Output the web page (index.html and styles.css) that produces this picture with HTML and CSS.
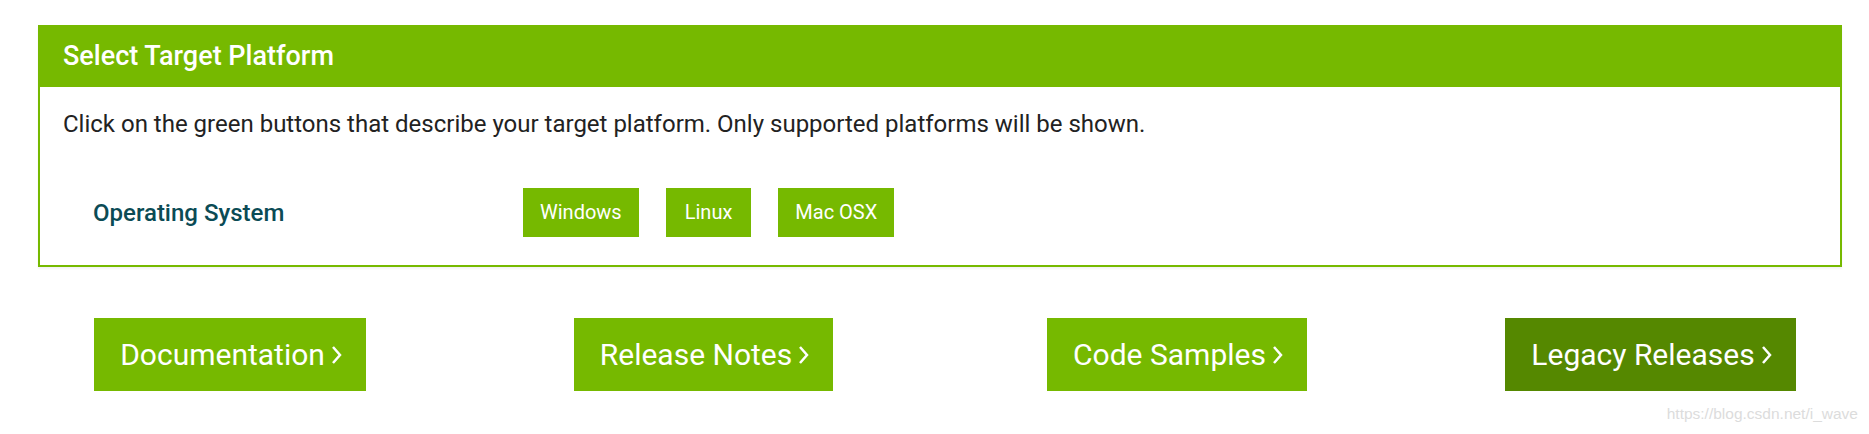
FILE: index.html
```html
<!DOCTYPE html>
<html lang="en">
<head>
<meta charset="utf-8">
<title>Select Target Platform</title>
<link rel="stylesheet" href="styles.css">
</head>
<body>
<div class="page">
  <section class="panel">
    <header class="panel-heading">Select Target Platform</header>
    <div class="panel-body">
      <p class="intro">Click on the green buttons that describe your target platform. Only supported platforms will be shown.</p>
      <div class="os-row">
        <div class="os-label">Operating System</div>
        <div class="os-options">
          <span class="opt">Windows</span>
          <span class="opt">Linux</span>
          <span class="opt">Mac OSX</span>
        </div>
      </div>
    </div>
  </section>
  <nav class="links">
    <div class="link-col"><a class="link-btn">Documentation<svg class="chev" viewBox="0 0 11 20" width="11" height="20"><path d="M2 2 L9 10 L2 18" fill="none" stroke="#fff" stroke-width="2.5"/></svg></a></div>
    <div class="link-col"><a class="link-btn">Release Notes<svg class="chev" viewBox="0 0 11 20" width="11" height="20"><path d="M2 2 L9 10 L2 18" fill="none" stroke="#fff" stroke-width="2.5"/></svg></a></div>
    <div class="link-col"><a class="link-btn">Code Samples<svg class="chev" viewBox="0 0 11 20" width="11" height="20"><path d="M2 2 L9 10 L2 18" fill="none" stroke="#fff" stroke-width="2.5"/></svg></a></div>
    <div class="link-col"><a class="link-btn dark">Legacy Releases<svg class="chev" viewBox="0 0 11 20" width="11" height="20"><path d="M2 2 L9 10 L2 18" fill="none" stroke="#fff" stroke-width="2.5"/></svg></a></div>
  </nav>
</div>
<div class="watermark">https://blog.csdn.net/i_wave</div>
</body>
</html>
```
FILE: styles.css
```css
html, body {
  margin: 0;
  padding: 0;
  background: #fff;
  overflow: hidden;
}
body {
  font-family: Roboto, "Noto Sans", sans-serif;
  width: 1869px;
  height: 434px;
  position: relative;
}
.page {
  padding: 25px 0 0 38px;
  width: 1804px;
}
.panel {
  box-shadow: 0 2px 2px rgba(0, 0, 0, 0.05);
}
.panel-heading {
  background: #76b900;
  color: #fff;
  height: 62px;
  line-height: 62px;
  padding-left: 25px;
  font-size: 27px;
  font-weight: 500;
}
.panel-body {
  border: 2px solid #76b900;
  border-top: none;
  padding: 0 0 28px 23px;
}
.intro {
  margin: 0;
  padding-top: 17px;
  line-height: 40px;
  font-size: 24px;
  color: #222;
}
.os-row {
  display: flex;
  align-items: center;
  margin-top: 44px;
}
.os-label {
  width: 460px;
  padding-left: 30px;
  box-sizing: border-box;
  font-size: 24px;
  font-weight: 500;
  color: #0b4b55;
}
.os-options {
  display: flex;
  gap: 27px;
}
.opt {
  background: #76b900;
  color: #fff;
  height: 49px;
  line-height: 49px;
  padding: 0 17px;
  font-size: 20px;
}
.opt:nth-child(2) {
  padding: 0 19px;
}
.links {
  display: grid;
  grid-template-columns: repeat(4, 473.5px);
  margin: 51px 0 0 -44.75px;
}
.link-col {
  display: flex;
  justify-content: center;
}
.link-btn {
  display: flex;
  align-items: center;
  gap: 6px;
  background: #76b900;
  color: #fff;
  height: 73px;
  padding: 0 24px 0 26px;
  font-size: 30px;
}
.link-btn.dark {
  background: #558800;
}
.chev {
  display: block;
}
.watermark {
  position: absolute;
  right: 11px;
  bottom: 11px;
  font-family: "Liberation Sans", Arial, sans-serif;
  font-size: 15.5px;
  color: #dcdcdc;
}
```
